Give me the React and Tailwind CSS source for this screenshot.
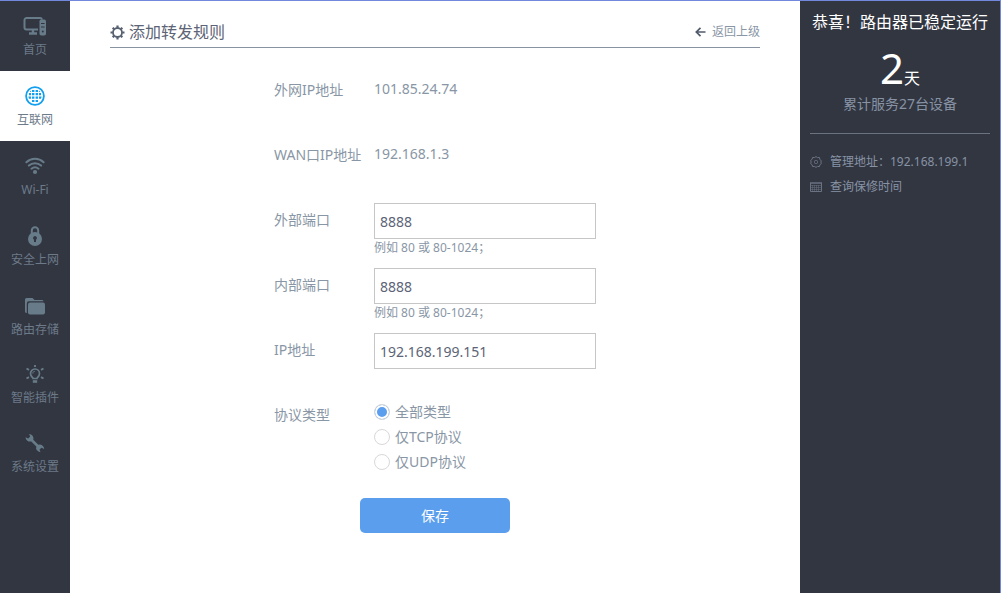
import React from 'react';

const HomeIcon = () => (
  <svg width="24" height="20" viewBox="0 0 24 20" fill="none" stroke="currentColor">
    <path d="M15 13.5H3.5a2 2 0 0 1-2-2V4a2 2 0 0 1 2-2H17a2 2 0 0 1 2 1.6" strokeWidth="2" />
    <path d="M10 13v4M6 17.500h8" strokeWidth="2.4" />
    <rect x="16.5" y="3.500" width="6.5" height="16" rx="1.8" fill="currentColor" stroke="none" />
    <path d="M18 7.5h3.6M18 11h3.6" stroke="#323641" />
    <circle cx="19.8" cy="15.5" r="1" fill="#323641" stroke="none" />
  </svg>
);

const GlobeIcon = () => (
  <svg width="20" height="20" viewBox="0 0 20 20" fill="currentColor">
    <circle cx="10" cy="10" r="8.9" fill="none" stroke="currentColor" strokeWidth="1.8" />
    <path d="M7 4h2.4v2H7zM10.6 4H13v2h-2.4zM4 7h2v2.3H4zM7 7h2.4v2.3H7zM10.6 7H13v2.3h-2.4zM14 7h2v2.3h-2zM3.4 10.6H6v2.2H4zM7 10.6h2.4v2.2H7zM10.6 10.6H13v2.2h-2.4zM14 10.6h2.6l-.6 2.2h-2zM7 14h2.4v2H7zM10.6 14H13v2h-2.4zM4.6 5.9 6 4.5V6zM14 4.5 15.4 6H14z" />
  </svg>
);

const WifiIcon = () => (
  <svg width="20" height="18" viewBox="0 0 20 18" fill="none" stroke="currentColor" strokeWidth="2" strokeLinecap="round">
    <path d="M1.4 5.2c5-4.6 12.200-4.600 17.200 0M3.900 8.600c3.600-3.300 8.600-3.300 12.200 0M6.500 11.700c2.100-1.800 4.900-1.800 7 0" />
    <circle cx="10" cy="15" r="2.100" fill="currentColor" stroke="none" />
  </svg>
);

const LockIcon = () => (
  <svg width="16" height="20" viewBox="0 0 16 20">
    <path d="M4.800 8.500V4.500a3.200 3.200 0 0 1 6.400 0v4" fill="none" stroke="currentColor" strokeWidth="2" />
    <circle cx="8" cy="13" r="7" fill="currentColor" />
    <path d="M8 10a2 2 0 0 1 1 3.700V16H7v-2.300A2 2 0 0 1 8 10z" fill="#323641" />
  </svg>
);

const FolderIcon = () => (
  <svg width="22" height="18" viewBox="0 0 22 18" fill="currentColor">
    <path d="M1 14.500V2.500A1.500 1.500 0 0 1 2.500 1h6l2 2H18a1.500 1.500 0 0 1 1.500 1.200H5A2.200 2.200 0 0 0 2.800 6.400V16A1.700 1.700 0 0 1 1 14.500z" />
    <rect x="4" y="5.500" width="17" height="12" rx="2" />
  </svg>
);

const BulbIcon = () => (
  <svg width="20" height="20" viewBox="0 0 20 20" fill="none" stroke="currentColor" strokeWidth="1.700">
    <path d="M8 14.500c0-1.200-2.500-2-2.500-5a4.500 4.500 0 0 1 9 0c0 3-2.500 3.800-2.500 5z" />
    <path d="M7.800 9.500c0-1.400.8-2.200 2-2.200" strokeWidth="1" />
    <path d="M7.800 17.500h4.400" strokeWidth="2.600" />
    <path d="M10 1v2M1.500 4.500l2.500 1.400M18.500 4.500 16 5.900M1.500 14.500 4 13.100M18.500 14.500 16 13.100" strokeWidth="1.900" />
  </svg>
);

const WrenchIcon = () => (
  <svg width="20" height="20" viewBox="0 0 20 20" fill="currentColor">
    <path d="M4 1a4.500 4.500 0 0 1 4.300 5.800l5 5a4.500 4.500 0 0 1 5.900 4.200l-2.700-1.200-2 1.700 1 2.700a4.500 4.500 0 0 1-4.200-5.800l-5-5A4.500 4.500 0 0 1 .5 4.200l2.700 1.200L5.200 3.600z" />
  </svg>
);

const navItems = [
  { label: '首页', icon: HomeIcon },
  { label: '互联网', icon: GlobeIcon, active: true },
  { label: 'Wi-Fi', icon: WifiIcon },
  { label: '安全上网', icon: LockIcon },
  { label: '路由存储', icon: FolderIcon },
  { label: '智能插件', icon: BulbIcon },
  { label: '系统设置', icon: WrenchIcon },
];

const fields = [
  { id: 'outer-port', label: '外部端口', value: '8888', hint: '例如 80 或 80-1024；' },
  { id: 'inner-port', label: '内部端口', value: '8888', hint: '例如 80 或 80-1024；' },
  { id: 'ip-address', label: 'IP地址', value: '192.168.199.151' },
];

const protocols = ['全部类型', '仅TCP协议', '仅UDP协议'];

function Sidebar() {
  return (
    <nav className="w-[70px] shrink-0 bg-[#323641]">
      {navItems.map(({ label, icon: Icon, active }) => (
        <a
          key={label}
          href="#"
          className={
            active
              ? 'flex h-[70px] flex-col items-center bg-white pt-[13px] text-[#12a0ee]'
              : 'flex h-[70px] flex-col items-center pt-[13px] text-[#677b89] nth-5:h-[68px] nth-6:h-[69px]'
          }
        >
          <span className="flex h-6 items-center"><Icon /></span>
          <span className="mt-1 text-xs leading-4 whitespace-nowrap text-[#6c7a89]">{label}</span>
        </a>
      ))}
    </nav>
  );
}

function RuleForm() {
  return (
    <form className="mx-auto mt-[25px] w-[322px] text-sm text-[#8996a5]" onSubmit={e => e.preventDefault()}>
      <dl>
        <div className="flex h-[65px]">
          <dt className="w-[100px] leading-[34px]">外网IP地址</dt>
          <dd className="leading-8">101.85.24.74</dd>
        </div>
        <div className="flex h-[65px]">
          <dt className="w-[100px] leading-[34px]">WAN口IP地址</dt>
          <dd className="leading-8">192.168.1.3</dd>
        </div>
      </dl>
      {fields.map(field => (
        <div key={field.id} className="flex h-[65px]">
          <label htmlFor={field.id} className="w-[100px] shrink-0 leading-[34px]">{field.label}</label>
          <div className="flex-1">
            <input
              id={field.id}
              type="text"
              defaultValue={field.value}
              className="block h-9 w-full border border-[#c6c6c6] bg-white px-[5px] text-sm text-[#5c6476] outline-none focus:border-[#5a9eed]"
            />
            {field.hint && <p className="text-xs leading-[18px]">{field.hint}</p>}
          </div>
        </div>
      ))}
      <fieldset className="flex" aria-labelledby="protocol-label">
        <span id="protocol-label" className="w-[100px] leading-[34px]">协议类型</span>
        <div className="pt-px">
          {protocols.map((name, i) => (
            <label key={name} className="flex h-[25px] items-center gap-[5px]">
              <input
                type="radio"
                name="protocol"
                defaultChecked={i === 0}
                className="size-4 appearance-none rounded-full border border-[#d8d8d8] bg-white checked:bg-[#5a9eed] checked:shadow-[inset_0_0_0_2px_#fff]"
              />
              {name}
            </label>
          ))}
        </div>
      </fieldset>
      <button type="submit" className="mx-auto mt-6 block h-[35px] w-[150px] rounded-[5px] bg-[#5a9eed] text-white">
        保存
      </button>
    </form>
  );
}

function StatusPanel() {
  return (
    <aside className="w-[200px] shrink-0 bg-[#323641] px-2.5 pt-[9px] text-[#8793a5]">
      <h2 className="text-center text-base whitespace-nowrap text-white">恭喜！路由器已稳定运行</h2>
      <p className="mt-2.5 flex h-12 items-baseline justify-center text-white">
        <span className="text-[42px] leading-12">2</span>
        <span className="leading-6">天</span>
      </p>
      <p className="text-center text-sm leading-6">累计服务27台设备</p>
      <ul className="mt-[17px] border-t border-[#6b7280] pt-[15px] text-xs leading-[25px] whitespace-nowrap">
        <li className="flex items-center gap-2">
          <svg width="12" height="12" viewBox="0 0 12 12" fill="none" stroke="#6b7282">
            <path d="m6 .6 1.500 1 1.900-.2.500 1.900L11.400 5 10.800 6l.6 1.500-1.500 1.200-.5 1.900-1.900-.2L6 11.400l-1.500-1-1.900.2-.5-1.900L.6 7.500 1.200 6 .6 4.500l1.500-1.200.5-1.900 1.900.2z" />
            <rect x="4.500" y="4.500" width="3" height="3" rx="1" />
          </svg>
          管理地址：192.168.199.1
        </li>
        <li>
          <a href="#" className="flex items-center gap-2">
            <svg width="12" height="10" viewBox="0 0 12 10" fill="none" stroke="#6b7282">
              <path d="M0 1h12" strokeWidth="1.500" />
              <path d="M.5 1v8.500h11V1" />
              <path d="M0 3.500h12M0 5.500h12M0 7.500h12M2.500 3v6M4.500 3v6M6.500 3v6M8.500 3v6" strokeWidth=".5" />
            </svg>
            查询保修时间
          </a>
        </li>
      </ul>
    </aside>
  );
}

export default function App() {
  return (
    <div className="flex min-h-screen border-t border-r border-[#7188dc] bg-white font-['Noto_Sans','Noto_Sans_CJK_SC',sans-serif]">
      <Sidebar />
      <main className="min-w-0 flex-1 px-10 pt-4">
        <header className="flex h-[31px] items-center justify-between border-b border-[#8793a0]">
          <h1 className="flex items-center gap-1 text-base text-[#5c6476]">
            <svg width="15" height="15" viewBox="0 0 15 15" fill="none" stroke="#56606f">
              <circle cx="7.500" cy="7.500" r="4.500" strokeWidth="1.800" />
              <path d="M7.500 .5v2.200M7.500 12.300v2.200M.5 7.500h2.200M12.300 7.500h2.200M2.700 2.700 4.100 4.100M10.900 10.900l1.400 1.400M2.700 12.300l1.400-1.400M10.900 4.100l1.400-1.400" strokeWidth="2.200" />
            </svg>
            添加转发规则
          </h1>
          <a href="#" className="flex items-center gap-1.5 text-xs text-[#8996a5]">
            <svg width="11" height="10" viewBox="0 0 11 10" fill="none" stroke="#4f5b6b" strokeWidth="1.700">
              <path d="M5.500 .8 1.300 5l4.200 4.200M1.500 5H10.500" />
            </svg>
            返回上级
          </a>
        </header>
        <RuleForm />
      </main>
      <StatusPanel />
    </div>
  );
}
